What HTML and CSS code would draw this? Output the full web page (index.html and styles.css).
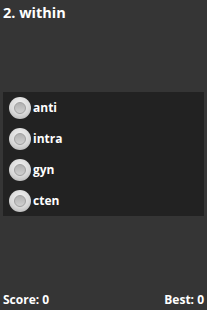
FILE: index.html
```html
<!DOCTYPE html>
<html>
<head>
    <link rel="stylesheet" href="styles.css">
</head>
<body>
    <div class="screen">
        <div class="question">2. within</div>
        <div class="middle">
            <div class="answers">
                <div class="answer"><span class="radio"><span class="dot"></span></span><span class="answer-text">anti</span></div>
                <div class="answer"><span class="radio"><span class="dot"></span></span><span class="answer-text">intra</span></div>
                <div class="answer"><span class="radio"><span class="dot"></span></span><span class="answer-text">gyn</span></div>
                <div class="answer"><span class="radio"><span class="dot"></span></span><span class="answer-text">cten</span></div>
            </div>
        </div>
        <div class="footer">
            <span class="score">Score: 0</span>
            <span class="best">Best: 0</span>
        </div>
    </div>
</body>
</html>
```

FILE: styles.css
```css
body {
    margin: 0;
    padding: 0;
    background-color: #353535;
    font-family: 'Open Sans', 'DejaVu Sans', sans-serif;
    color: #FFF;
}
.screen {
    display: flex;
    flex-direction: column;
    width: 207px;
    height: 310px;
    box-sizing: border-box;
    padding: 3px 3px 2px 3px;
}
.question {
    font-size: 14.5px;
    font-weight: bold;
    line-height: 20px;
}
.middle {
    flex: 1;
    display: flex;
    flex-direction: column;
    justify-content: center;
}
.answers {
    background-color: #222;
    margin-bottom: 7px;
}
.answer {
    display: flex;
    align-items: center;
    height: 31px;
    padding-left: 6px;
}
.radio {
    width: 22px;
    height: 22px;
    border-radius: 50%;
    background: radial-gradient(circle at 50% 35%, #f2f2f2 0%, #d8d8d8 55%, #a8a8a8 100%);
    display: flex;
    align-items: center;
    justify-content: center;
    margin-right: 2px;
}
.dot {
    width: 10px;
    height: 10px;
    border-radius: 50%;
    background: linear-gradient(#b0b0b0, #d0d0d0);
    border: 1px solid #a0a0a0;
}
.answer-text {
    font-size: 12px;
    font-weight: bold;
}
.footer {
    display: flex;
    justify-content: space-between;
    font-size: 12px;
    font-weight: bold;
    line-height: 16px;
}
```
